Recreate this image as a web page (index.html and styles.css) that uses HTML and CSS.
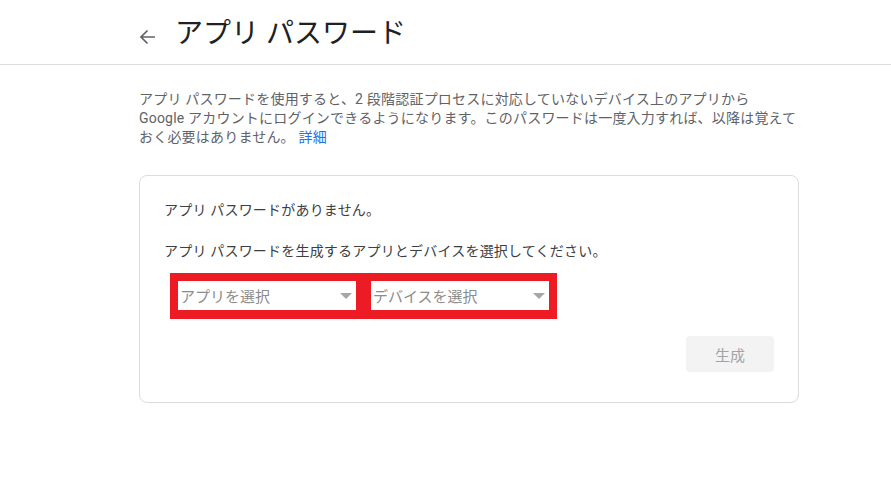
FILE: index.html
```html
<!DOCTYPE html>
<html lang="ja">
<head>
<meta charset="utf-8">
<title>アプリ パスワード</title>
<link rel="stylesheet" href="styles.css">
</head>
<body>
<header class="topbar">
  <div class="topbar-inner">
    <span class="back" aria-label="戻る">
      <svg width="24" height="24" viewBox="0 0 24 24"><path d="M19 12H5.5M11.5 5.5L5 12l6.5 6.5" fill="none" stroke="#5f6368" stroke-width="1.7"/></svg>
    </span>
    <h1 class="title">アプリ パスワード</h1>
  </div>
</header>
<main class="content">
  <p class="intro">アプリ パスワードを使用すると、2 段階認証プロセスに対応していないデバイス上のアプリから<br>Google アカウントにログインできるようになります。このパスワードは一度入力すれば、以降は覚えて<br>おく必要はありません。 <a class="link" href="#">詳細</a></p>
  <section class="card">
    <p class="card-text">アプリ パスワードがありません。</p>
    <p class="card-text second">アプリ パスワードを生成するアプリとデバイスを選択してください。</p>
    <div class="highlight">
      <div class="select"><span class="select-label">アプリを選択</span><span class="caret"></span></div>
      <div class="select"><span class="select-label">デバイスを選択</span><span class="caret"></span></div>
    </div>
    <div class="actions">
      <button class="btn" disabled>生成</button>
    </div>
  </section>
</main>
</body>
</html>
```
FILE: styles.css
```css
html, body {
  margin: 0;
  padding: 0;
  background: #ffffff;
  font-family: Roboto, "Noto Sans CJK JP", sans-serif;
}
.topbar {
  height: 65px;
  border-bottom: 1px solid #dadce0;
  box-sizing: border-box;
}
.topbar-inner {
  display: flex;
  align-items: center;
  height: 100%;
  padding-left: 136px;
  padding-top: 9px;
  box-sizing: border-box;
}
.back {
  display: flex;
  width: 24px;
  height: 24px;
}
.title {
  margin: 0 0 0 15px;
  font-size: 28px;
  font-weight: 400;
  color: #202124;
  line-height: 36px;
  position: relative;
  top: -3px;
}
.content {
  margin-left: 139px;
  width: 660px;
}
.intro {
  margin: 25px 0 0;
  font-size: 14px;
  line-height: 19px;
  color: #5f6368;
  letter-spacing: 0.2px;
}
.link {
  color: #1a73e8;
  text-decoration: none;
}
.card {
  margin-top: 28px;
  border: 1px solid #dadce0;
  border-radius: 8px;
  padding: 24px 24px 28px;
  height: 228px;
  box-sizing: border-box;
}
.card-text {
  margin: 0;
  font-size: 14px;
  line-height: 20px;
  color: #3c4043;
  letter-spacing: 0.2px;
}
.card-text.second {
  margin-top: 21px;
}
.highlight {
  display: inline-flex;
  gap: 15px;
  margin: 12px 0 0 6px;
  padding: 8px 8px 9px;
  background: #ed1c24;
}
.select {
  width: 178px;
  height: 29px;
  background: #ffffff;
  display: flex;
  align-items: center;
  justify-content: space-between;
  padding: 0 4px 0 2px;
  box-sizing: border-box;
}
.select-label {
  font-size: 15px;
  color: #8c8c8c;
}
.caret {
  width: 0;
  height: 0;
  border-left: 6px solid transparent;
  border-right: 6px solid transparent;
  border-top: 6px solid #a6a6a6;
}
.actions {
  display: flex;
  justify-content: flex-end;
  margin-top: 17px;
}
.btn {
  width: 88px;
  height: 36px;
  border: none;
  border-radius: 4px;
  background: #f3f3f3;
  color: #a3a3a3;
  font-family: Roboto, "Noto Sans CJK JP", sans-serif;
  font-size: 15px;
}
```
